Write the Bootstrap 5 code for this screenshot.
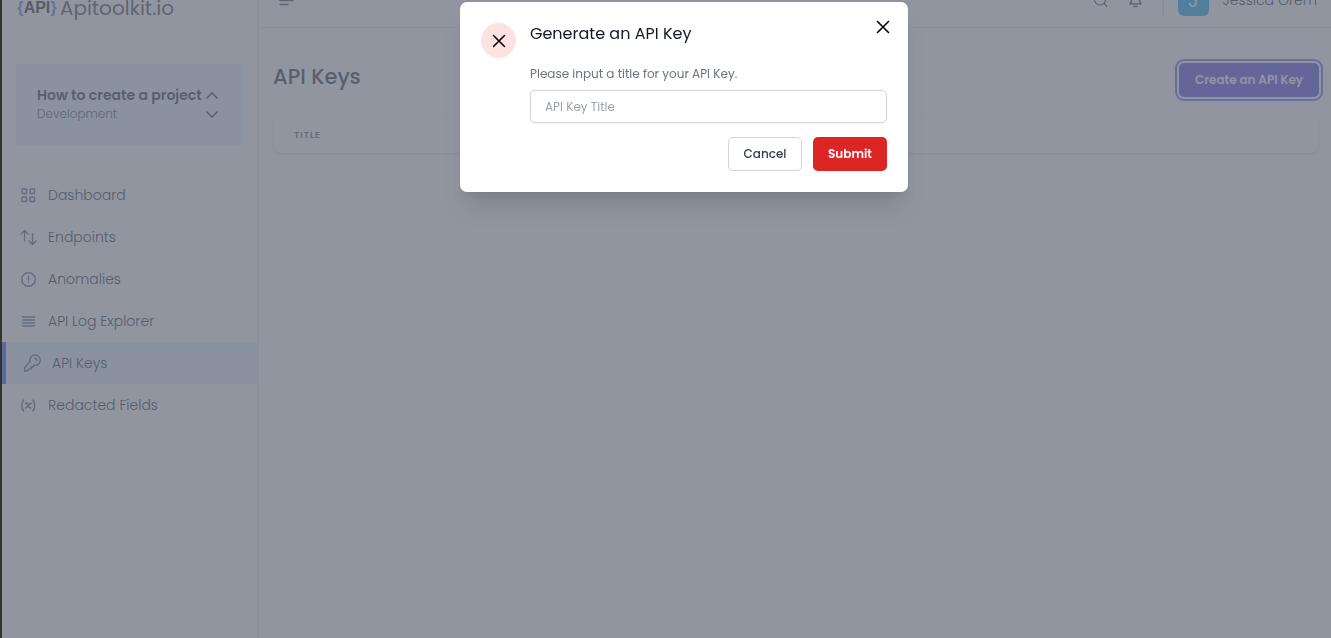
<!DOCTYPE html>
<html lang="en">
<head>
<meta charset="utf-8">
<meta name="viewport" content="width=device-width, initial-scale=1">
<title>API Keys - Apitoolkit.io</title>
<link href="https://cdn.jsdelivr.net/npm/bootstrap@5.3.0/dist/css/bootstrap.min.css" rel="stylesheet">
<style>
  body { font-family: Poppins, Inter, "Open Sans", sans-serif; font-size: 14px; line-height: 20px; color: #374151; overflow: hidden; }
  svg { fill: none; stroke: currentColor; stroke-linecap: round; stroke-linejoin: round; flex: none; }
  a { color: inherit; text-decoration: none; }

  /* the page is scrolled down by half of the top bar */
  .app-shell { margin-top: -27px; min-height: calc(100vh + 27px); border-left: 2px solid #333; }
  .side-panel { width: 257px; border-right: 2px solid #e5e9f0; padding-top: 20px; }
  .brand-link { height: 30px; padding-left: 15px; font-size: 20px; gap: 3px; color: #374151; }
  .brand-mark { font-family: "Liberation Sans", sans-serif; font-size: 16px; color: #111827; }
  .brand-mark i { font-style: normal; color: #5b78d8; font-size: 17px; }
  .project-box { margin: 41px 14px 29px; height: 81px; padding: 0 25px 2px 21px; background: #e8f1fc; border-radius: 4px; color: #1f2937; border: 0; text-align: left; }
  .project-name { font-weight: 600; font-size: 14px; }
  .project-env { font-size: 12px; line-height: 18px; color: #374151; font-weight: 300; }
  .side-link { height: 42px; padding-left: 18px; gap: 11px; font-size: 14px; font-weight: 300; color: #111827; }
  .side-link svg { color: #4b5f80; }
  .side-link.active { background: #e8f1fc; border-left: 4px solid #2f56f0; }

  .top-bar { height: 55px; border-bottom: 1px solid #dfe3ea; padding: 0 14px 0 19px; }
  .bell-icon { margin: 0 20px 0 21px; }
  .top-rule { width: 2px; height: 32px; background: #dfe3ea; }
  .avatar-box { width: 31px; height: 31px; margin: 0 14px; border-radius: 6px; background: #0ea5e9; color: #fff; font-size: 20px; }
  .user-name { font-size: 14px; font-weight: 300; color: #111827; }
  .page-main { padding: 35px 12px 0 14px; }
  .page-title { font-size: 21px; line-height: 28px; font-weight: 500; color: #1f2937; }
  .create-btn { height: 34px; width: 140px; padding: 0; font-size: 12px; font-weight: 600; color: #fff; background: #5046e5; border: 0; border-radius: 5px; box-shadow: 0 0 0 2px #fff, 0 0 0 4px #6366f1; }
  .keys-card { margin-top: 19px; border-radius: 8px; box-shadow: 0 1px 3px rgba(0,0,0,.16); background: #fff; }
  .keys-card th { height: 37px; padding: 0 21px; font-size: 9px; line-height: 16px; font-weight: 600; letter-spacing: 1px; color: #4b5563; }

  .shade { position: fixed; inset: 0 0 0 2px; background: rgba(107,114,128,.75); }
  .dialog-layer { position: fixed; inset: 0; padding: 2px 0 0 37px; }
  .key-dialog { width: 448px; max-width: 100%; background: #fff; border-radius: 7px; padding: 21px; box-shadow: 0 20px 25px -5px rgba(0,0,0,.1), 0 8px 10px -6px rgba(0,0,0,.1); gap: 14px; }
  .alert-dot { width: 35px; height: 35px; background: #fee2e2; color: #000; flex: none; }
  .dialog-title { font-size: 16px; line-height: 22px; font-weight: 400; color: #111827; }
  .dialog-close { padding: 0; border: 0; background: none; width: 18px; height: 18px; line-height: 0; color: #000; margin: -5px -5px 0 0; }
  .dialog-text { font-size: 12px; line-height: 18px; color: #6b7280; margin: 20px 0 7px; }
  .key-input { height: 33px; padding: 0 14px; font-size: 12px; border: 1px solid #d1d5db; border-radius: 5px; box-shadow: 0 1px 2px rgba(0,0,0,.05); }
  .key-input::placeholder { color: #9ca3af; }
  .dialog-actions { gap: 11px; margin-top: 14px; }
  .dialog-actions .btn { width: 74px; height: 34px; padding: 0; font-size: 12px; border-radius: 5px; font-weight: 500; }
  .cancel-btn { border: 1px solid #d1d5db; color: #374151; background: #fff; }
  .dialog-actions .submit-btn { background: #dc2626; color: #fff; border: 0; font-weight: 600; }
</style>
</head>
<body>
<div class="app-shell d-flex">
  <aside class="side-panel d-flex flex-column flex-shrink-0">
    <a href="#" class="brand-link d-flex align-items-center"><b class="brand-mark d-flex align-items-center"><i>{</i>API<i>}</i></b><span>Apitoolkit.io</span></a>
    <button type="button" class="project-box d-flex align-items-center justify-content-between">
      <span class="d-flex flex-column text-nowrap"><span class="project-name">How to create a project</span><span class="project-env">Development</span></span>
      <svg width="12" height="30" viewBox="0 0 12 30" stroke-width="1.5"><path d="M1 9l5-5 5 5M1 23l5 5 5-5"/></svg>
    </button>
    <nav class="d-flex flex-column">
      <a href="#" class="side-link d-flex align-items-center"><svg width="17" height="17" viewBox="0 0 17 17" stroke-width="1.4"><rect x="2" y="2" width="4.500" height="4.500" rx=".6"/><rect x="10" y="2" width="4.500" height="4.500" rx=".6"/><rect x="2" y="10" width="4.500" height="4.500" rx=".6"/><rect x="10" y="10" width="4.500" height="4.500" rx=".6"/></svg>Dashboard</a>
      <a href="#" class="side-link d-flex align-items-center"><svg width="17" height="17" viewBox="0 0 17 17" stroke-width="1.4"><path d="M4.500 12V1.500M1 5l3.500-3.500L8 5M12.500 4.500V15.500M9 12l3.500 3.500L16 12"/></svg>Endpoints</a>
      <a href="#" class="side-link d-flex align-items-center"><svg width="17" height="17" viewBox="0 0 17 17" stroke-width="1.4"><path d="M5.800 2h5.400L15 5.800v5.400L11.200 15H5.800L2 11.200V5.800zM8.500 5.500v3.500M8.500 11.200v.1"/></svg>Anomalies</a>
      <a href="#" class="side-link d-flex align-items-center"><svg width="17" height="17" viewBox="0 0 17 17" stroke-width="1.3"><path d="M2.500 4h12M2.500 7h12M2.500 10h12M2.500 13h12"/></svg>API Log Explorer</a>
      <a href="#" class="side-link active d-flex align-items-center" aria-current="page"><svg width="17" height="18" viewBox="0 0 17 18" stroke-width="1.4"><path d="M6 7.200C5.300 3.500 8 1 11 1c3 0 5.300 2.300 5.300 5.200 0 3.200-2.800 5.600-6 5L8.500 13H7v2H5l-1.500 2H.700v-3.500zM11 4.500c1.200 0 2 .8 2 2"/></svg>API Keys</a>
      <a href="#" class="side-link d-flex align-items-center"><svg width="17" height="17" viewBox="0 0 17 17" stroke-width="1.5"><path d="M3.500 3C1.300 6 1.300 11 3.500 14M13 3c2.200 3 2.200 8 0 11M5.500 6.500c2.200-.8 2.500.5 3 2s.6 3 2.500 2.500M11.500 6.300C9 6 8 11 5.500 11"/></svg>Redacted Fields</a>
    </nav>
  </aside>
  <div class="flex-grow-1">
    <header class="top-bar d-flex align-items-center">
      <svg width="16" height="14" viewBox="0 0 16 14" stroke-width="1.5"><path d="M2 2.500h13M2 7.500h13M2 11.500h8"/></svg>
      <div class="d-flex align-items-center ms-auto">
        <svg width="15" height="15" viewBox="0 0 15 15" stroke-width="1.2"><circle cx="7" cy="6.500" r="5.500"/><path d="M11 10.500l3 3"/></svg>
        <svg class="bell-icon" width="13" height="16" viewBox="0 0 13 16" stroke-width="1.5"><path d="M1 12h11c-1.200-1.500-1.500-3-1.500-5.500C10.500 3.500 9 2 6.500 2S2.500 3.500 2.500 6.500C2.500 9 2.200 10.500 1 12zM5 14.500h3"/></svg>
        <span class="top-rule"></span>
        <span class="avatar-box d-flex align-items-center justify-content-center">J</span>
        <span class="user-name">Jessica Orem</span>
      </div>
    </header>
    <main class="page-main">
      <div class="d-flex align-items-start justify-content-between">
        <h1 class="page-title m-0">API Keys</h1>
        <button type="button" class="create-btn btn">Create an API Key</button>
      </div>
      <div class="keys-card">
        <table class="w-100"><thead><tr><th scope="col">TITLE</th></tr></thead></table>
      </div>
    </main>
  </div>
</div>
<div class="shade"></div>
<div class="dialog-layer d-flex justify-content-center align-items-start">
  <form class="key-dialog d-flex" role="dialog" aria-modal="true" aria-labelledby="dialog-title">
    <span class="alert-dot rounded-circle d-flex align-items-center justify-content-center"><svg width="14" height="14" viewBox="0 0 14 14" stroke-width="1.6"><path d="M1.500 1.500l11 11M12.500 1.500l-11 11"/></svg></span>
    <div class="flex-grow-1">
      <div class="d-flex justify-content-between">
        <h2 class="dialog-title m-0" id="dialog-title">Generate an API Key</h2>
        <button type="button" class="dialog-close" aria-label="Close"><svg width="14" height="14" viewBox="0 0 14 14" stroke-width="1.6"><path d="M1.500 1.500l11 11M12.500 1.500l-11 11"/></svg></button>
      </div>
      <label class="dialog-text d-block" for="key-title">Please input a title for your API Key.</label>
      <input class="key-input form-control" id="key-title" type="text" placeholder="API Key Title">
      <div class="dialog-actions d-flex justify-content-end">
        <button type="button" class="cancel-btn btn">Cancel</button>
        <button type="submit" class="submit-btn btn">Submit</button>
      </div>
    </div>
  </form>
</div>
<script src="https://cdn.jsdelivr.net/npm/bootstrap@5.3.0/dist/js/bootstrap.bundle.min.js"></script>
</body>
</html>
